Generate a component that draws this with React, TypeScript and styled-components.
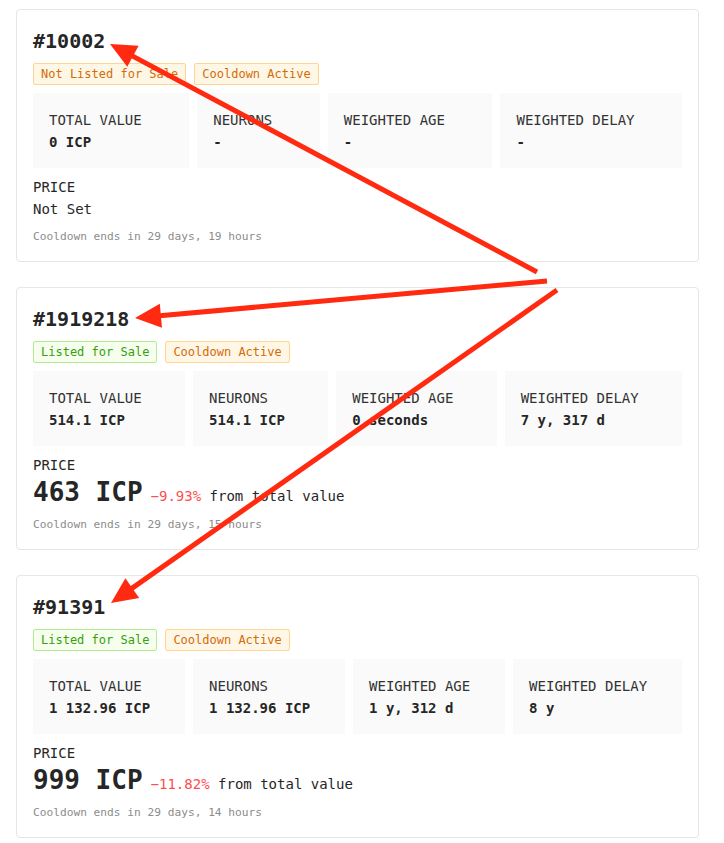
import React, { FC } from "react";
import styled, { createGlobalStyle } from "styled-components";

const GlobalStyle = createGlobalStyle`
  html, body {
    margin: 0;
    padding: 0;
    background: #fff;
  }

  body {
    font-family: "DejaVu Sans Mono", "Liberation Mono", monospace;
    color: #262626;
  }
`

const Page = styled.div`
  position: relative;
  width: 724px;
  min-height: 843px;
  box-sizing: border-box;
  padding: 9px 25px 0 16px;
  display: flex;
  flex-direction: column;
  gap: 25px;
`

const Card = styled.div`
  border: 1px solid #e6e6e6;
  border-radius: 4px;
  padding: 16px;
  background: #fff;
`

const Title = styled.h2`
  margin: 0 0 7px;
  font-size: 20px;
  line-height: 30px;
  font-weight: bold;
  color: #262626;
`

const Tags = styled.div`
  display: flex;
  gap: 8px;
  margin-bottom: 8px;
`

type TagProps = {
  $tone: 'green' | 'orange'
}

const Tag = styled.span<TagProps>`
  font-size: 12px;
  line-height: 20px;
  padding: 0 7px;
  border-radius: 2px;
  border: 1px solid ${props => props.$tone === 'green' ? '#b7eb8f' : '#ffd591'};
  background: ${props => props.$tone === 'green' ? '#f6ffed' : '#fff7e6'};
  color: ${props => props.$tone === 'green' ? '#389e0d' : '#d46b08'};
`

const Stats = styled.div`
  display: flex;
  gap: 8px;
`

const Stat = styled.div`
  flex: 1 1 auto;
  padding: 16px;
  background: #fafafa;
  white-space: nowrap;
`

const StatLabel = styled.div`
  font-size: 14px;
  line-height: 23px;
  color: #333;
`

const StatValue = styled.div`
  font-size: 14px;
  line-height: 20px;
  font-weight: bold;
  color: #262626;
`

const PriceLabel = styled.div`
  margin-top: 8px;
  font-size: 14px;
  line-height: 22px;
  color: #262626;
`

const NotSet = styled.div`
  font-size: 14px;
  line-height: 22px;
  color: #262626;
`

const PriceValue = styled.div`
  font-size: 26px;
  line-height: 32px;
  font-weight: bold;
  color: #262626;
`

const PriceNote = styled.span`
  margin-left: 8px;
  font-size: 14px;
  line-height: 1;
  font-weight: normal;
  color: #262626;
`

const Diff = styled.span`
  color: #ff4d4f;
`

const Cooldown = styled.div`
  margin-top: 8px;
  font-size: 11.2px;
  line-height: 17px;
  color: #8c8c8c;
`

const Overlay = styled.svg`
  position: absolute;
  left: 0;
  top: 0;
  pointer-events: none;
  overflow: visible;
`

type Listing = {
  id: string
  listed: boolean
  total: string
  neurons: string
  age: string
  delay: string
  price?: string
  diff?: string
  cooldown: string
}

const listings: Listing[] = [
  { id: '10002', listed: false, total: '0 ICP', neurons: '-', age: '-', delay: '-', cooldown: '29 days, 19 hours' },
  { id: '1919218', listed: true, total: '514.1 ICP', neurons: '514.1 ICP', age: '0 seconds', delay: '7 y, 317 d', price: '463 ICP', diff: '−9.93%', cooldown: '29 days, 15 hours' },
  { id: '91391', listed: true, total: '1 132.96 ICP', neurons: '1 132.96 ICP', age: '1 y, 312 d', delay: '8 y', price: '999 ICP', diff: '−11.82%', cooldown: '29 days, 14 hours' },
]

const NeuronCard: FC<{ item: Listing }> = ({ item }) => {
  return (
    <Card>
      <Title>#{item.id}</Title>
      <Tags>
        {item.listed
          ? <Tag $tone="green">Listed for Sale</Tag>
          : <Tag $tone="orange">Not Listed for Sale</Tag>}
        <Tag $tone="orange">Cooldown Active</Tag>
      </Tags>
      <Stats>
        <Stat>
          <StatLabel>TOTAL VALUE</StatLabel>
          <StatValue>{item.total}</StatValue>
        </Stat>
        <Stat>
          <StatLabel>NEURONS</StatLabel>
          <StatValue>{item.neurons}</StatValue>
        </Stat>
        <Stat>
          <StatLabel>WEIGHTED AGE</StatLabel>
          <StatValue>{item.age}</StatValue>
        </Stat>
        <Stat>
          <StatLabel>WEIGHTED DELAY</StatLabel>
          <StatValue>{item.delay}</StatValue>
        </Stat>
      </Stats>
      <PriceLabel>PRICE</PriceLabel>
      {item.price ? (
        <PriceValue>
          {item.price}
          <PriceNote><Diff>{item.diff}</Diff> from total value</PriceNote>
        </PriceValue>
      ) : (
        <NotSet>Not Set</NotSet>
      )}
      <Cooldown>Cooldown ends in {item.cooldown}</Cooldown>
    </Card>
  )
}

// annotation arrows: tail -> tip
const arrows = [
  { from: [537, 272], to: [110, 44] },
  { from: [547, 281], to: [135, 318] },
  { from: [557, 290], to: [111, 603] },
]

const Arrow: FC<{ from: number[], to: number[] }> = ({ from, to }) => {
  const dx = to[0] - from[0]
  const dy = to[1] - from[1]
  const len = Math.hypot(dx, dy)
  const ux = dx / len
  const uy = dy / len
  const head = 26
  const half = 12
  const bx = to[0] - ux * head
  const by = to[1] - uy * head
  const px = -uy * half
  const py = ux * half
  const points = `${to[0]},${to[1]} ${bx + px},${by + py} ${bx - px},${by - py}`
  return (
    <g>
      <line x1={from[0]} y1={from[1]} x2={bx + ux * 4} y2={by + uy * 4} stroke="#ff2a10" strokeWidth={5} />
      <polygon points={points} fill="#ff2a10" />
    </g>
  )
}

export default function App() {
  return (
    <>
      <GlobalStyle />
      <Page>
        {listings.map(item => <NeuronCard key={item.id} item={item} />)}
        <Overlay width={724} height={843} viewBox="0 0 724 843">
          {arrows.map((a, i) => <Arrow key={i} from={a.from} to={a.to} />)}
        </Overlay>
      </Page>
    </>
  )
}
